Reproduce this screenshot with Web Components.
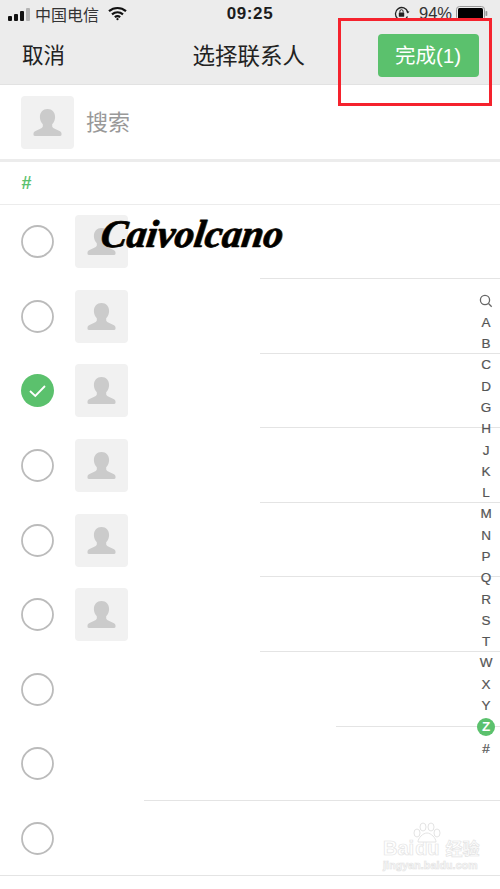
<!DOCTYPE html>
<html lang="zh">
<head>
<meta charset="utf-8">
<title>选择联系人</title>
<style>
  html, body { margin: 0; height: 889px; overflow: hidden; background: #fff; }
  body { font-family: "Liberation Sans", "Noto Sans CJK SC", sans-serif; position: relative; }
</style>
</head>
<body>
<select-contact-page></select-contact-page>

<script>
const PERSON = `<svg viewBox="0 0 53 53" width="53" height="53">
  <path fill="#cbcbcb" d="M26.5 13c-4.6 0-7.6 3.4-7.6 8 0 2.9 1.100 5.300 2.900 7.200v1.800c0 1-.5 1.700-1.500 2.200l-6.300 3.100c-.9.5-1.500 1.300-1.500 2.400v1.100c0 .7.500 1.200 1.200 1.200h25.600c.7 0 1.200-.5 1.200-1.200v-1.100c0-1.100-.6-1.900-1.500-2.400l-6.300-3.100c-1-.5-1.500-1.200-1.500-2.200v-1.800c1.800-1.900 2.900-4.300 2.900-7.200 0-4.600-3-8-7.600-8z"/>
</svg>`;

class StatusBar extends HTMLElement {
    constructor() {
        super();
        this.attachShadow({ mode: "open" });
        this.shadowRoot.innerHTML = `
            <style>
                :host { display: grid; grid-template-columns: 1fr auto 1fr; align-items: center; height: 27px; padding: 0 12px 0 8px; color: #333; font-size: 16px; }
                .left, .right { display: flex; align-items: center; }
                .right { justify-content: flex-end; }
                .bars { display: flex; align-items: flex-end; gap: 2px; height: 13px; margin-top: 1px; }
                .bars i { width: 4px; background: #111; border-radius: 1px; }
                .bars i:last-child { background: #b4b4b4; }
                .carrier { margin: 0 9px 0 5px; }
                .time { font-weight: 700; font-size: 17px; color: #1c1c1c; letter-spacing: .6px; margin-left: 4px; }
                .pct { font-size: 16.500px; margin: 0 4px 0 9px; }
                svg { display: block; }
            </style>
            <div class="left">
                <div class="bars"><i style="height:5px"></i><i style="height:7px"></i><i style="height:10px"></i><i style="height:13px"></i></div>
                <span class="carrier">中国电信</span>
                <svg width="19" height="15" viewBox="0 0 19 15" fill="none" stroke="#111" stroke-width="2.200">
                    <path d="M1 5.200C6 .9 13 .9 18 5.200"/><path d="M4 8.300c3.300-2.700 7.700-2.700 11 0"/><path d="M6.800 11.200c1.700-1.200 3.700-1.200 5.400 0"/>
                    <circle cx="9.500" cy="13.200" r="1.100" fill="#111" stroke="none"/>
                </svg>
            </div>
            <div class="time">09:25</div>
            <div class="right">
                <svg width="16" height="15" viewBox="0 0 16 15" fill="none">
                    <path d="M13.500 10.500A6.300 6.300 0 1 1 13.800 6" stroke="#222" stroke-width="1.300"/>
                    <path d="M15.500 5.500l-1.700 2-1.700-2z" fill="#222"/>
                    <rect x="4.800" y="6.500" width="5.400" height="4.300" rx=".6" fill="#222"/>
                    <path d="M5.900 6.500V5.300a1.600 1.600 0 0 1 3.200 0v1.200" stroke="#222" stroke-width="1"/>
                </svg>
                <span class="pct">94%</span>
                <svg width="32" height="15" viewBox="0 0 32 15">
                    <rect x=".5" y=".5" width="28" height="14" rx="3" fill="none" stroke="#999"/>
                    <rect x="2" y="2" width="25" height="11" rx="1.500" fill="#000"/>
                    <rect x="29.500" y="5" width="1.800" height="5" rx=".8" fill="#999"/>
                </svg>
            </div>
        `;
    }
}

class NavBar extends HTMLElement {
    constructor() {
        super();
        this.attachShadow({ mode: "open" });
        this.shadowRoot.innerHTML = `
            <style>
                :host { display: grid; grid-template-columns: 1fr auto 1fr; align-items: center; height: 58px; padding: 0 21.500px 4px 22px; border-bottom: 1px solid #e2e2e2; box-sizing: border-box; color: #222; font-size: 21.500px; }
                .title { font-size: 22.500px; margin-left: -3px; }
                button { justify-self: end; width: 101px; height: 43px; margin-top: 4px; border: 0; border-radius: 4px; background: #5bc16d; color: #fff; font: inherit; font-size: 20.500px; padding: 0 0 4px; }
            </style>
            <div>取消</div>
            <div class="title">选择联系人</div>
            <button>完成(1)</button>
        `;
    }
}

class AvatarBox extends HTMLElement {
    constructor() {
        super();
        this.attachShadow({ mode: "open" });
        this.shadowRoot.innerHTML = `
            <style>
                :host { display: block; width: 53px; height: 53px; border-radius: 4px; background: #f1f1f1; }
                svg { display: block; }
            </style>
            ${PERSON}
        `;
    }
}

class SearchRow extends HTMLElement {
    constructor() {
        super();
        this.attachShadow({ mode: "open" });
        this.shadowRoot.innerHTML = `
            <style>
                :host { display: flex; align-items: center; gap: 12px; height: 77px; padding-left: 21px; box-sizing: border-box; border-bottom: 3px solid #ececec; color: #999; font-size: 22px; }
                span { margin-top: -5px; }
            </style>
            <avatar-box></avatar-box>
            <span>搜索</span>
        `;
    }
}

class SectionHead extends HTMLElement {
    constructor() {
        super();
        this.attachShadow({ mode: "open" });
        this.shadowRoot.innerHTML = `
            <style>
                :host { display: flex; align-items: center; height: 43px; padding: 1px 0 0 21.500px; box-sizing: border-box; border-bottom: 1px solid #ececec; color: #5bc16d; font-size: 18px; font-weight: 700; }
            </style>
            <slot></slot>
        `;
    }
}

class ContactRow extends HTMLElement {
    constructor() {
        super();
        this.attachShadow({ mode: "open" });
        const inset = this.getAttribute("inset") || "260";
        const mark = this.hasAttribute("checked")
            ? `<svg width="33" height="33" viewBox="0 0 33 33"><circle cx="16.500" cy="16.500" r="16.500" fill="#5bc16d"/><path d="M9 17l5.300 5L24 12" fill="none" stroke="#fff" stroke-width="1.800"/></svg>`
            : `<svg width="33" height="33" viewBox="0 0 33 33"><circle cx="16.500" cy="16.500" r="15.500" fill="none" stroke="#bbb" stroke-width="1.800"/></svg>`;
        this.shadowRoot.innerHTML = `
            <style>
                :host { display: flex; align-items: center; gap: 21px; height: 74.600px; padding-left: 21px; box-sizing: border-box; position: relative; }
                :host::after { content: ""; position: absolute; left: ${inset}px; right: 0; bottom: 0; height: 1px; background: #e4e4e4; }
                svg { display: block; }
            </style>
            ${mark}
            ${this.hasAttribute("noavatar") ? "" : "<avatar-box></avatar-box>"}
        `;
    }
}

class LetterIndex extends HTMLElement {
    constructor() {
        super();
        this.attachShadow({ mode: "open" });
        const letters = "ABCDGHJKLMNPQRSTWXYZ#".split("");
        this.shadowRoot.innerHTML = `
            <style>
                :host { position: absolute; top: 290.300px; right: 0; width: 28px; display: grid; grid-auto-rows: 21.300px; justify-items: center; align-items: center; color: #555; font-size: 13.500px; -webkit-text-stroke: .2px #555; }
                .on { width: 18px; height: 18px; line-height: 18px; border-radius: 50%; background: #5bc16d; color: #fff; -webkit-text-stroke: 0; font-weight: 700; text-align: center; }
                svg { display: block; }
            </style>
            <svg width="14" height="14" viewBox="0 0 14 14" fill="none" stroke="#666" stroke-width="1.300"><circle cx="6" cy="6" r="4.600"/><path d="M9.500 9.500l3.200 3.200"/></svg>
            ${letters.map((l) => `<div class="${l === "Z" ? "on" : ""}">${l}</div>`).join("")}
        `;
    }
}

class MarkOverlay extends HTMLElement {
    constructor() {
        super();
        this.attachShadow({ mode: "open" });
        this.shadowRoot.innerHTML = `
            <style>
                :host { position: absolute; inset: 0; pointer-events: none; display: block; }
                .frame { position: absolute; left: 338px; top: 18px; width: 148px; height: 82px; border: 3px solid #f5222d; }
                .sign { position: absolute; left: 98px; top: 210px; font: italic 700 39px/48px "Liberation Serif", serif; color: #000; -webkit-text-stroke: .7px #000; text-shadow: 1px 0 0 #c9a35c; transform: skewX(-8deg); transform-origin: left bottom; }
                .baidu { position: absolute; left: 383px; top: 836px; color: #fff; -webkit-text-stroke: .7px #e4e4e4; }
                .brand { font: 700 20px/24px "Liberation Sans", sans-serif; display: flex; align-items: center; gap: 1px; }
                .brand b { font: 700 17px/24px "Noto Sans CJK SC", sans-serif; margin-left: 5px; }
                .url { font: 700 10.500px/13px "Liberation Sans", sans-serif; letter-spacing: .15px; margin-top: -1px; }
                .paw { position: absolute; left: 30px; top: -14px; }
            </style>
            <div class="frame"></div>
            <div class="sign">Caivolcano</div>
            <div class="baidu">
                <svg class="paw" width="28" height="22" viewBox="0 0 28 22" fill="#fff" stroke="#e4e4e4"><ellipse cx="4" cy="11" rx="3" ry="4"/><ellipse cx="10" cy="5" rx="3" ry="4"/><ellipse cx="18" cy="5" rx="3" ry="4"/><ellipse cx="24" cy="11" rx="3" ry="4"/><path d="M14 11c-4 0-9 5-9 9h18c0-4-5-9-9-9z"/></svg>
                <div class="brand">Bai<span>du</span><b>经验</b></div>
                <div class="url">jingyan.baidu.com</div>
            </div>
        `;
    }
}

class SelectContactPage extends HTMLElement {
    constructor() {
        super();
        this.attachShadow({ mode: "open" });
        const rows = [
            {}, {}, { checked: true }, {}, {}, {},
            { noavatar: true, inset: 336 },
            { noavatar: true, inset: 144 },
            { noavatar: true, inset: 0 },
        ];
        const html = rows.map((r) => `<contact-row
            ${r.checked ? "checked" : ""} ${r.noavatar ? "noavatar" : ""} inset="${r.inset ?? 260}"></contact-row>`).join("");
        this.shadowRoot.innerHTML = `
            <style>
                :host { display: block; }
                header { background: #ececec; }
                .list { margin-top: -.600px; }
            </style>
            <header>
                <status-bar></status-bar>
                <nav-bar></nav-bar>
            </header>
            <search-row></search-row>
            <section-head>#</section-head>
            <div class="list">${html}</div>
            <letter-index></letter-index>
            <mark-overlay></mark-overlay>
        `;
    }
}

customElements.define("avatar-box", AvatarBox);
customElements.define("status-bar", StatusBar);
customElements.define("nav-bar", NavBar);
customElements.define("search-row", SearchRow);
customElements.define("section-head", SectionHead);
customElements.define("contact-row", ContactRow);
customElements.define("letter-index", LetterIndex);
customElements.define("mark-overlay", MarkOverlay);
customElements.define("select-contact-page", SelectContactPage);
</script>
</body>
</html>
